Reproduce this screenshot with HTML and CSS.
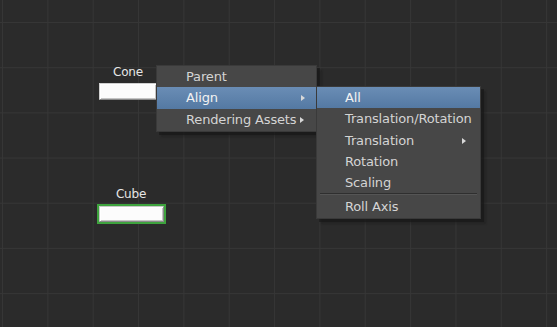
FILE: index.html
```html
<!DOCTYPE html>
<html>
<head>
<meta charset="utf-8">
<link rel="stylesheet" href="styles.css">
</head>
<body>
<div class="canvas">
  <div class="node node-cone">
    <div class="node-label">Cone</div>
    <div class="node-box"></div>
  </div>
  <div class="node node-cube">
    <div class="node-label">Cube</div>
    <div class="node-box selected"></div>
  </div>

  <div class="menu menu-main">
    <div class="item">Parent</div>
    <div class="item active">Align<span class="arrow"></span></div>
    <div class="item">Rendering Assets<span class="arrow"></span></div>
  </div>

  <div class="menu menu-sub">
    <div class="item active">All</div>
    <div class="item">Translation/Rotation</div>
    <div class="item">Translation<span class="arrow"></span></div>
    <div class="item">Rotation</div>
    <div class="item">Scaling</div>
    <div class="sep"></div>
    <div class="item">Roll Axis</div>
  </div>
</div>
</body>
</html>
```
FILE: styles.css
```css
html, body {
  margin: 0;
  padding: 0;
}
body {
  width: 557px;
  height: 327px;
  overflow: hidden;
  background: #2b2b2b;
  font-family: "DejaVu Sans", "Liberation Sans", sans-serif;
}
.canvas {
  position: relative;
  width: 557px;
  height: 327px;
  background-color: #2b2b2b;
  background-image:
    linear-gradient(to right, #363636 1px, transparent 1px),
    linear-gradient(to bottom, #363636 1px, transparent 1px);
  background-size: 45.35px 45.2px;
  background-position: 2px 22px;
}
.node {
  position: absolute;
  display: flex;
  flex-direction: column;
  align-items: center;
}
.node-label {
  color: #e6e6e6;
  font-size: 12px;
  line-height: 14px;
  letter-spacing: -0.2px;
}
.node-cone {
  left: 98px;
  top: 65px;
  width: 60px;
}
.node-cone .node-label {
  margin-bottom: 4px;
}
.node-cone .node-box {
  width: 56px;
  height: 15px;
}
.node-box {
  box-sizing: content-box;
  background: #fcfcfc;
  border: 1px solid #d0d0d0;
  border-right-color: #8a8a8a;
  border-bottom-color: #8a8a8a;
  box-shadow: inset 1px 1px 0 #ffffff, inset -1px -1px 0 #c4c4c4;
}
.node-cube {
  left: 95px;
  top: 187px;
  width: 72px;
}
.node-cube .node-label {
  margin-bottom: 5px;
}
.node-cube .node-box {
  width: 63px;
  height: 14px;
}
.node-box.selected {
  border: 1px solid #c8c8c8;
  border-right-color: #8a8a8a;
  border-bottom-color: #8a8a8a;
  outline: 2px solid #3ea33e;
  outline-offset: 0;
}
.menu {
  position: absolute;
  background: #474747;
  border: 1px solid #3a3a3a;
  box-shadow: 3px 3px 0 rgba(20,20,20,0.55), 5px 5px 2px rgba(20,20,20,0.3);
  display: flex;
  flex-direction: column;
}
.menu-main {
  left: 156px;
  top: 65px;
  width: 159px;
  padding: 0 0 1px;
}
.menu-sub {
  left: 316px;
  top: 86px;
  width: 163px;
  padding: 0;
}
.item {
  position: relative;
  height: 21.3px;
  line-height: 21px;
  font-size: 13px;
  color: #d4d4d4;
  letter-spacing: -0.15px;
  white-space: nowrap;
}
.menu-main .item {
  padding-left: 29px;
}
.menu-sub .item {
  padding-left: 28px;
}
.item.active {
  background: linear-gradient(to bottom, #6a8db5, #5479a3);
  color: #f2f2f2;
}
.arrow {
  position: absolute;
  right: 11px;
  top: 8px;
  width: 0;
  height: 0;
  border-left: 4px solid #d8d8d8;
  border-top: 3px solid transparent;
  border-bottom: 3px solid transparent;
}
.menu-main .item:nth-child(3) .arrow {
  right: 12px;
}
.menu-sub .arrow {
  right: 14px;
}
.sep {
  height: 1px;
  margin: 0 3px 1px 3px;
  background: #2f2f2f;
  border-bottom: 1px solid #555;
}
```
